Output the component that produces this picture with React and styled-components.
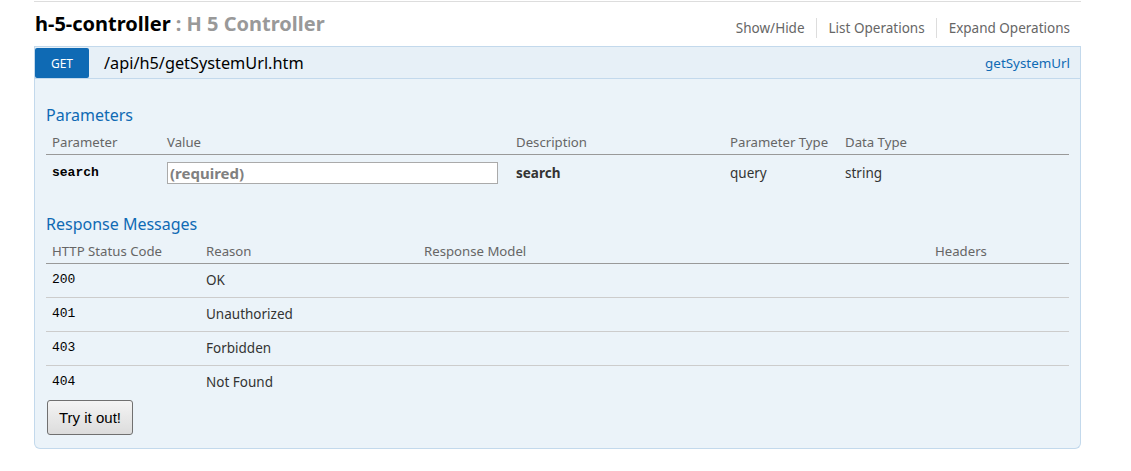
import React from 'react';
import styled, { createGlobalStyle } from 'styled-components';

const GlobalStyle = createGlobalStyle`
  body {
    margin: 0;
    background: #fff;
    font-family: "Noto Sans", "Open Sans", sans-serif;
    color: #333;
  }
`;

const Resource = styled.div`
  margin: 0 0 0 34px;
  width: 1047px;
  padding-top: 1px;
`;

const ResourceHeading = styled.div`
  border-top: 1px solid #ddd;
  height: 44px;
  display: flex;
  justify-content: space-between;
  align-items: flex-start;
`;

const Title = styled.h2`
  margin: 10px 0 0 1px;
  font-size: 20px;
  line-height: 24px;
  font-weight: bold;
  color: #000;
`;

const Subtitle = styled.span`
  color: #999;
`;

const Links = styled.ul`
  display: flex;
  list-style: none;
  margin: 16px 0 0;
  padding: 0;
`;

const LinkItem = styled.li`
  font-size: 13.5px;
  line-height: 20px;
  color: #666;
  padding: 0 11px 0 12px;
  border-right: ${(p) => (p.last ? 'none' : '1px solid #ddd')};
`;

const Operation = styled.div``;

const OpHeading = styled.div`
  display: flex;
  align-items: center;
  height: 31px;
  background: #e7f0f7;
  border: 1px solid #c3d9ec;
`;

const Method = styled.span`
  width: 54px;
  height: 30px;
  margin-top: 1px;
  display: flex;
  align-items: center;
  justify-content: center;
  background: #0f6ab4;
  color: #fff;
  font-size: 12px;
  border-radius: 2px;
`;

const Path = styled.span`
  margin-left: 15px;
  font-size: 16.3px;
  color: #000;
  flex: 1;
`;

const Nickname = styled.span`
  font-size: 13.4px;
  color: #0f6ab4;
  margin-right: 10px;
`;

const Content = styled.div`
  background: #ebf3f9;
  border: 1px solid #c3d9ec;
  border-top: none;
  border-bottom-left-radius: 6px;
  border-bottom-right-radius: 6px;
  padding: 10px 10px 13px 11px;
`;

const SectionTitle = styled.h4`
  margin: ${(p) => p.top || 15}px 0 0;
  font-size: 16px;
  line-height: 22px;
  font-weight: normal;
  color: #0f6ab4;
`;

const Table = styled.table`
  width: 1023px;
  border-collapse: collapse;
  table-layout: fixed;
`;

const Th = styled.th`
  text-align: left;
  font-weight: normal;
  font-size: 13.2px;
  line-height: 18px;
  color: #666;
  padding: 7px 6px 3px;
  border-bottom: 1px solid #999;
`;

const Td = styled.td`
  box-sizing: border-box;
  height: ${(p) => (p.tall ? 36 : 34)}px;
  font-size: 13.5px;
  line-height: 18px;
  color: #333;
  padding: ${(p) => (p.tall ? '1px 6px 0' : '0 6px 1px')};
  vertical-align: middle;
  font-weight: ${(p) => (p.bold ? 'bold' : 'normal')};
`;

const Code = styled.span`
  display: inline-block;
  vertical-align: top;
  line-height: 18px;
  font-family: "Liberation Mono", "DejaVu Sans Mono", monospace;
  font-size: 13px;
  color: #000;
  font-weight: ${(p) => (p.bold ? 'bold' : 'normal')};
`;

const Row = styled.tr`
  border-bottom: ${(p) => (p.last ? 'none' : '1px solid #ccc')};
`;

const Input = styled.input`
  box-sizing: border-box;
  width: 331px;
  height: 22px;
  margin: 0;
  padding: 0 2px;
  border: 1px solid #aaa;
  background: #fff;
  font-family: "Noto Sans", sans-serif;
  font-size: 15px;
  font-weight: bold;
  display: block;
  &::placeholder {
    color: #808080;
  }
`;

const Submit = styled.button`
  margin: 1px 0 0 1px;
  width: 86px;
  height: 35px;
  border: 1px solid #707070;
  border-radius: 3px;
  background: linear-gradient(#f4f4f4, #dcdcdc);
  font-family: "Liberation Sans", Arial, sans-serif;
  font-size: 15px;
  color: #000;
  padding: 0;
`;

const responses = [
  ['200', 'OK'],
  ['401', 'Unauthorized'],
  ['403', 'Forbidden'],
  ['404', 'Not Found'],
];

function App() {
  return (
    <>
      <GlobalStyle />
      <Resource>
        <ResourceHeading>
          <Title>
            h-5-controller <Subtitle>: H 5 Controller</Subtitle>
          </Title>
          <Links>
            <LinkItem>Show/Hide</LinkItem>
            <LinkItem>List Operations</LinkItem>
            <LinkItem last>Expand Operations</LinkItem>
          </Links>
        </ResourceHeading>
        <Operation>
          <OpHeading>
            <Method>GET</Method>
            <Path>/api/h5/getSystemUrl.htm</Path>
            <Nickname>getSystemUrl</Nickname>
          </OpHeading>
          <Content>
            <SectionTitle>Parameters</SectionTitle>
            <Table>
              <colgroup>
                <col style={{ width: 115 }} />
                <col style={{ width: 349 }} />
                <col style={{ width: 214 }} />
                <col style={{ width: 115 }} />
                <col style={{ width: 230 }} />
              </colgroup>
              <thead>
                <tr>
                  <Th>Parameter</Th>
                  <Th>Value</Th>
                  <Th>Description</Th>
                  <Th>Parameter Type</Th>
                  <Th>Data Type</Th>
                </tr>
              </thead>
              <tbody>
                <Row last>
                  <Td tall><Code bold>search</Code></Td>
                  <Td tall><Input placeholder="(required)" /></Td>
                  <Td tall bold>search</Td>
                  <Td tall>query</Td>
                  <Td tall>string</Td>
                </Row>
              </tbody>
            </Table>
            <SectionTitle top={22}>Response Messages</SectionTitle>
            <Table>
              <colgroup>
                <col style={{ width: 154 }} />
                <col style={{ width: 218 }} />
                <col style={{ width: 511 }} />
                <col style={{ width: 140 }} />
              </colgroup>
              <thead>
                <tr>
                  <Th>HTTP Status Code</Th>
                  <Th>Reason</Th>
                  <Th>Response Model</Th>
                  <Th>Headers</Th>
                </tr>
              </thead>
              <tbody>
                {responses.map(([code, reason], i) => (
                  <Row key={code} last={i === responses.length - 1}>
                    <Td><Code>{code}</Code></Td>
                    <Td>{reason}</Td>
                    <Td />
                    <Td />
                  </Row>
                ))}
              </tbody>
            </Table>
            <Submit>Try it out!</Submit>
          </Content>
        </Operation>
      </Resource>
    </>
  );
}

export default App;
